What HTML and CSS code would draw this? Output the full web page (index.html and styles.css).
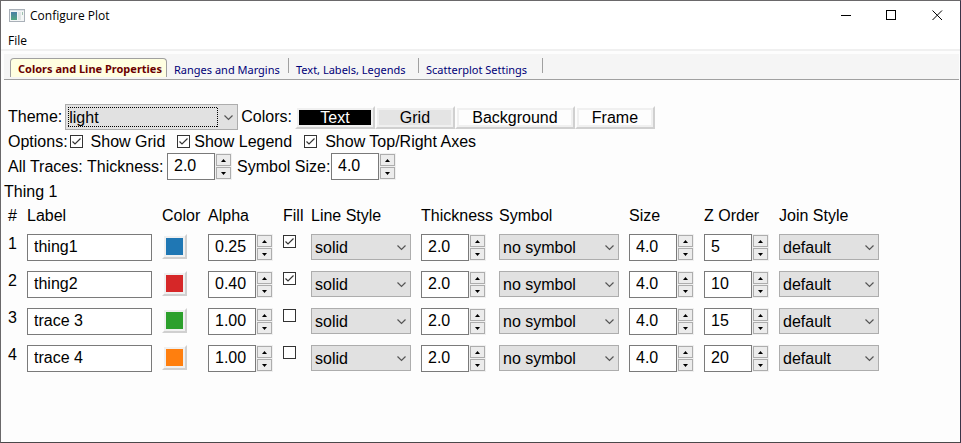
FILE: index.html
```html
<!DOCTYPE html>
<html lang="en">
<head>
<meta charset="utf-8">
<title>Configure Plot</title>
<link rel="stylesheet" href="styles.css">
<script src="app.js" defer></script>
</head>
<body>
<div class="window">
  <header class="titlebar">
    <svg class="app-icon" width="16" height="14" viewBox="0 0 16 14" aria-hidden="true">
      <defs><linearGradient id="pane" x1="0" y1="0" x2="0" y2="1"><stop offset="0" stop-color="#4a7fa5"/><stop offset="1" stop-color="#55a882"/></linearGradient></defs>
      <rect x="0.5" y="0.5" width="15" height="12" fill="#f4f6f6" stroke="#a9b0b8"/>
      <rect x="1" y="1" width="14" height="1" fill="#dde3e8"/>
      <rect x="2" y="3" width="6" height="8" fill="url(#pane)"/>
      <rect x="9" y="3" width="3" height="8" fill="#dfe5e5"/>
      <rect x="13" y="3" width="1" height="3" fill="#9fc3b0"/>
    </svg>
    <h1 class="title">Configure Plot</h1>
    <div class="window-buttons">
      <button type="button" aria-label="Minimize"><svg width="11" height="11" shape-rendering="crispEdges"><path d="M1 5.5H11" stroke="#000"/></svg></button>
      <button type="button" aria-label="Maximize"><svg width="11" height="11" shape-rendering="crispEdges"><rect x="0.5" y="0.5" width="9" height="9" fill="none" stroke="#000"/></svg></button>
      <button type="button" aria-label="Close"><svg width="11" height="11"><path d="M0.5 0.5L10 10M10 0.5L0.5 10" stroke="#000"/></svg></button>
    </div>
  </header>
  <nav class="menubar"><button type="button">File</button></nav>
  <div class="tabs" role="tablist">
    <button type="button" class="tab active" role="tab" aria-selected="true">Colors and Line Properties</button>
    <button type="button" class="tab ranges" role="tab">Ranges and Margins</button>
    <button type="button" class="tab labels" role="tab">Text, Labels, Legends</button>
    <button type="button" class="tab scatter" role="tab">Scatterplot Settings</button>
  </div>
  <main class="panel">
    <div class="row theme-row">
      <label for="theme">Theme:</label>
      <select id="theme" class="theme focused"><option>light</option></select>
      <span>Colors:</span>
      <div class="color-buttons">
        <button type="button" class="raised text">Text</button>
        <button type="button" class="raised grid">Grid</button>
        <button type="button" class="raised wide">Background</button>
        <button type="button" class="raised">Frame</button>
      </div>
    </div>
    <div class="row options-row">
      <span>Options:</span>
      <label class="check roomy"><input type="checkbox" checked>Show Grid</label>
      <label class="check"><input type="checkbox" checked>Show Legend</label>
      <label class="check roomy"><input type="checkbox" checked>Show Top/Right Axes</label>
    </div>
    <div class="all-row">
      <span>All Traces:</span>
      <label for="all-thickness">Thickness:</label>
      <span class="spin"><input id="all-thickness" type="text" value="2.0"></span>
      <label for="all-size">Symbol Size:</label>
      <span class="spin"><input id="all-size" type="text" value="4.0"></span>
    </div>
    <h2 class="group">Thing 1</h2>
    <table class="traces">
      <colgroup><col class="c-num"><col class="c-label"><col class="c-color"><col class="c-spin"><col class="c-fill"><col class="c-line"><col class="c-thick"><col class="c-symbol"><col class="c-spin"><col class="c-spin"><col class="c-join"></colgroup>
      <thead><tr><th>#</th><th>Label</th><th>Color</th><th>Alpha</th><th>Fill</th><th>Line Style</th><th>Thickness</th><th>Symbol</th><th>Size</th><th>Z Order</th><th>Join Style</th></tr></thead>
      <tbody>
        <tr>
          <td>1</td>
          <td><input class="name" type="text" aria-label="Label" value="thing1"></td>
          <td><button type="button" class="raised swatch blue" aria-label="Color"></button></td>
          <td><span class="spin"><input type="text" aria-label="Alpha" value="0.25"></span></td>
          <td><input type="checkbox" aria-label="Fill" checked></td>
          <td><select aria-label="Line Style"><option>solid</option></select></td>
          <td><span class="spin"><input type="text" aria-label="Thickness" value="2.0"></span></td>
          <td><select class="symbol" aria-label="Symbol"><option>no symbol</option></select></td>
          <td><span class="spin"><input type="text" aria-label="Size" value="4.0"></span></td>
          <td><span class="spin"><input type="text" aria-label="Z Order" value="5"></span></td>
          <td><select aria-label="Join Style"><option>default</option></select></td>
        </tr>
        <tr>
          <td>2</td>
          <td><input class="name" type="text" aria-label="Label" value="thing2"></td>
          <td><button type="button" class="raised swatch red" aria-label="Color"></button></td>
          <td><span class="spin"><input type="text" aria-label="Alpha" value="0.40"></span></td>
          <td><input type="checkbox" aria-label="Fill" checked></td>
          <td><select aria-label="Line Style"><option>solid</option></select></td>
          <td><span class="spin"><input type="text" aria-label="Thickness" value="2.0"></span></td>
          <td><select class="symbol" aria-label="Symbol"><option>no symbol</option></select></td>
          <td><span class="spin"><input type="text" aria-label="Size" value="4.0"></span></td>
          <td><span class="spin"><input type="text" aria-label="Z Order" value="10"></span></td>
          <td><select aria-label="Join Style"><option>default</option></select></td>
        </tr>
        <tr>
          <td>3</td>
          <td><input class="name" type="text" aria-label="Label" value="trace 3"></td>
          <td><button type="button" class="raised swatch green" aria-label="Color"></button></td>
          <td><span class="spin"><input type="text" aria-label="Alpha" value="1.00"></span></td>
          <td><input type="checkbox" aria-label="Fill"></td>
          <td><select aria-label="Line Style"><option>solid</option></select></td>
          <td><span class="spin"><input type="text" aria-label="Thickness" value="2.0"></span></td>
          <td><select class="symbol" aria-label="Symbol"><option>no symbol</option></select></td>
          <td><span class="spin"><input type="text" aria-label="Size" value="4.0"></span></td>
          <td><span class="spin"><input type="text" aria-label="Z Order" value="15"></span></td>
          <td><select aria-label="Join Style"><option>default</option></select></td>
        </tr>
        <tr>
          <td>4</td>
          <td><input class="name" type="text" aria-label="Label" value="trace 4"></td>
          <td><button type="button" class="raised swatch orange" aria-label="Color"></button></td>
          <td><span class="spin"><input type="text" aria-label="Alpha" value="1.00"></span></td>
          <td><input type="checkbox" aria-label="Fill"></td>
          <td><select aria-label="Line Style"><option>solid</option></select></td>
          <td><span class="spin"><input type="text" aria-label="Thickness" value="2.0"></span></td>
          <td><select class="symbol" aria-label="Symbol"><option>no symbol</option></select></td>
          <td><span class="spin"><input type="text" aria-label="Size" value="4.0"></span></td>
          <td><span class="spin"><input type="text" aria-label="Z Order" value="20"></span></td>
          <td><select aria-label="Join Style"><option>default</option></select></td>
        </tr>
      </tbody>
    </table>
  </main>
</div>
</body>
</html>
```

FILE: styles.css
```css
* { box-sizing: border-box; }

body {
  margin: 0;
  background: #fdfdfd;
  color: #000;
  font: 16px/18px "Liberation Sans", Arial, sans-serif;
}

button, input, select { font: inherit; color: inherit; margin: 0; }
button { padding: 0; border: 0; background: none; }

.window {
  min-height: 100vh;
  border: 1px solid #6a686a;
  border-right-color: #3a3448;
  border-bottom-color: #4a484a;
}

/* Title bar and menu */
.titlebar {
  display: flex;
  align-items: center;
  height: 29px;
  padding-left: 8px;
  background: #fff;
  font: 12px/16px "Open Sans", sans-serif;
}
.app-icon { margin-right: 5px; }
.title { margin: 0; font-size: 12px; font-weight: 400; }
.window-buttons { display: flex; margin-left: auto; }
.window-buttons button { display: flex; align-items: center; justify-content: center; width: 46px; height: 29px; }

.menubar {
  display: flex;
  align-items: center;
  height: 21px;
  padding: 2px 0 0 7px;
  background: #fff;
  border-bottom: 2px solid #f0f0f0;
  font: 12px/16px "Open Sans", sans-serif;
}

/* Tabs */
.tabs {
  display: flex;
  height: 26px;
  margin: 3px 1px 0 3px;
  padding: 4px 0 0 6px;
  background: #f5f5f5;
  border-bottom: 1px solid #a0a0a0;
  font: 11px/16px "Noto Sans", sans-serif;
}
.tab {
  display: flex;
  align-items: flex-end;
  justify-content: flex-start;
  height: 20px;
  padding-left: 7px;
  color: #000078;
  white-space: nowrap;
  background: linear-gradient(#a0a0a0, #a0a0a0) right top / 1px 15px no-repeat;
}
.tab.active {
  width: 157px;
  height: 19px;
  border: 1px solid #a0a0a0;
  border-bottom: 0;
  border-radius: 4px 4px 0 0;
  background: #ffffe1;
  color: #6b0000;
  font-weight: 700;
}
.tab.ranges { width: 122px; }
.tab.labels { width: 130px; }
.tab.scatter { width: 124px; }

/* Controls */
.panel { padding: 24px 7px; }
.row { display: flex; align-items: center; }

select {
  appearance: none;
  display: block;
  width: 100px;
  height: 26px;
  padding: 1px 24px 0 3px;
  border: 1px solid #adadad;
  border-radius: 0;
  background: #e1e1e1 url("data:image/svg+xml,%3Csvg xmlns='http://www.w3.org/2000/svg' width='9' height='6'%3E%3Cpath d='M.5 .5L4.5 4.5L8.5 .5' fill='none' stroke='%23555' stroke-width='1.2'/%3E%3C/svg%3E") right 4px top 10px no-repeat;
}
select.symbol { width: 120px; }
select.theme { width: 173px; }
.focused {
  background-image:
    url("data:image/svg+xml,%3Csvg xmlns='http://www.w3.org/2000/svg' width='9' height='6'%3E%3Cpath d='M.5 .5L4.5 4.5L8.5 .5' fill='none' stroke='%23555' stroke-width='1.2'/%3E%3C/svg%3E"),
    url("data:image/svg+xml,%3Csvg xmlns='http://www.w3.org/2000/svg' width='150' height='20'%3E%3Cpath d='M0 .5H150M0 19.5H150M.5 0V20M149.5 1V20' fill='none' stroke='%23000' stroke-dasharray='1 1'/%3E%3C/svg%3E");
  background-position: right 4px top 10px, left 2px top 2px;
}

input[type="text"] {
  display: block;
  height: 27px;
  padding: 0 0 2px 6px;
  border: 1px solid #7a7a7a;
  border-radius: 0;
  background: #fff;
}
.name { width: 125px; }

input[type="checkbox"] {
  appearance: none;
  display: block;
  width: 13px;
  height: 13px;
  border: 1px solid #333;
  background: #fff;
}
input[type="checkbox"]:checked {
  background: #fff url("data:image/svg+xml,%3Csvg xmlns='http://www.w3.org/2000/svg' width='11' height='11'%3E%3Cpath d='M1.5 5.5L4 8L9.5 2.5' fill='none' stroke='%23333' stroke-width='1.2'/%3E%3C/svg%3E") center no-repeat;
}

.spin { display: flex; }
.spin input { width: 48px; }
.steps {
  display: grid;
  gap: 1px;
  padding: 1px;
  width: 17px;
  height: 27px;
  background: #f0f0f0;
}
.steps button {
  display: flex;
  align-items: center;
  justify-content: center;
  border: 1px solid #adadad;
  background: #ececec;
}

.raised {
  width: 80px;
  height: 23px;
  border: 2px solid;
  border-color: #fdfdfd #d0d0d0 #d0d0d0 #fdfdfd;
  box-shadow: inset 0 0 0 2px #f0f0f0;
  background: #fdfdfd;
  line-height: 20px;
  overflow: hidden;
}
.raised.text { background: #000; color: #fff; }
.raised.grid { background: #e4e4e4; }
.raised.wide { width: 120px; }
.raised.swatch { display: block; width: 25px; height: 25px; }
.raised.blue { background: #1f77b4; }
.raised.red { background: #d62728; }
.raised.green { background: #2ca02c; }
.raised.orange { background: #ff7f0e; }

.theme-row { gap: 3px; }
.color-buttons { display: flex; }
.options-row { height: 23px; gap: 12px; }
.options-row > span { margin-right: -10px; }
.check { display: flex; align-items: center; gap: 4px; }
.check.roomy { gap: 8px; }
.all-row {
  display: grid;
  grid-template-columns: 79px 80px 70px 94px auto;
  align-items: center;
}

.group { margin: 3px 0 0 -4px; font-size: 16px; font-weight: 400; }

/* Trace table */
.traces { table-layout: fixed; width: 872px; border-collapse: collapse; }
th, td { padding: 0; text-align: left; vertical-align: top; font-weight: 400; }
th { height: 33px; padding-top: 6px; }
td { height: 37px; }
td:first-child { padding-top: 1px; }
td input[type="checkbox"] { margin-top: 1px; }
.c-num { width: 19px; }
.c-label { width: 135px; }
.c-color { width: 46px; }
.c-spin { width: 75px; }
.c-fill { width: 28px; }
.c-line { width: 110px; }
.c-thick { width: 78px; }
.c-symbol { width: 130px; }
.c-join { width: 101px; }
```

FILE: app.js
```js
// Adds the up and down buttons to each spin box.
const arrow = (points) =>
  `<svg width="5" height="3" aria-hidden="true"><path d="${points}"/></svg>`;

document.querySelectorAll(".spin").forEach((spin) => {
  const input = spin.querySelector("input");
  const steps = document.createElement("span");
  steps.className = "steps";
  steps.innerHTML =
    `<button type="button" aria-label="Increase">${arrow("M0 3L2.5 0L5 3Z")}</button>` +
    `<button type="button" aria-label="Decrease">${arrow("M0 0L2.5 3L5 0Z")}</button>`;
  const decimals = (input.value.split(".")[1] || "").length;
  steps.querySelectorAll("button").forEach((button, i) => {
    button.addEventListener("click", () => {
      const delta = (i === 0 ? 1 : -1) / 10 ** decimals;
      input.value = (Number(input.value) + delta).toFixed(decimals);
    });
  });
  spin.append(steps);
});
```
